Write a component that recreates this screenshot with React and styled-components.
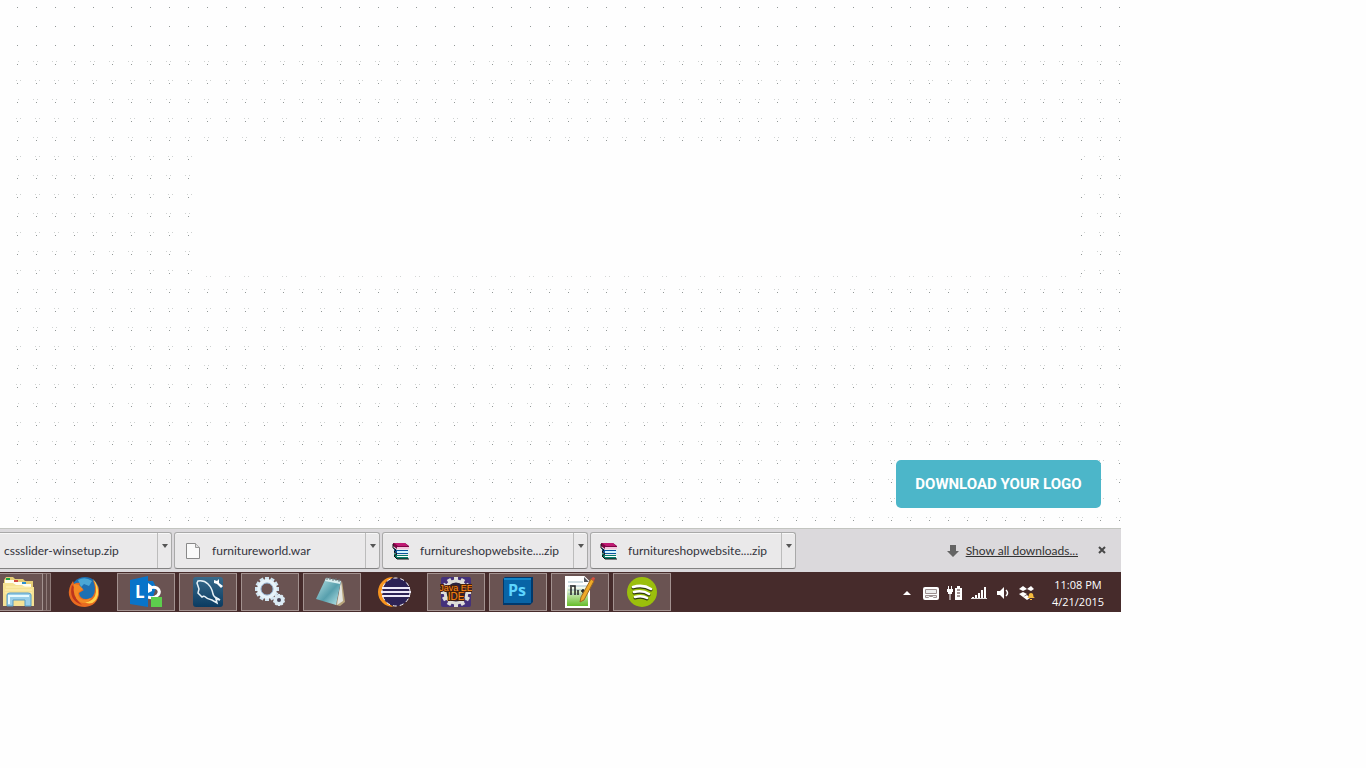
import React from "react";
import styled, { createGlobalStyle, css } from "styled-components";

const GlobalStyle = createGlobalStyle`
  * { box-sizing: border-box; }
  body { margin: 0; background: #fefefe; font-family: "Open Sans", "Noto Sans", sans-serif; }
  button { font: inherit; margin: 0; padding: 0; cursor: pointer; }
`;

const dot = (x, color) =>
  `conic-gradient(from 0deg at 1px 1px, transparent 75%, ${color} 0) ${x}`;

const Screen = styled.main`
  width: 100%;
  max-width: 1121px;
`;

const Canvas = styled.section`
  display: flex;
  flex-direction: column;
  min-height: 528px;
  background: ${dot("17px 7px / 19px 19px", "#929897")};
`;

const DenseDots = styled.div`
  flex: 1;
  display: flex;
  flex-direction: column;
  justify-content: space-between;
  margin: 60px 0 0 16px;
  padding: 84px 40px 20px 180px;
  background:
    ${dot("17px 1px / 19px 38px", "#cfd2d1")},
    ${dot("2px 1px / 19px 38px", "#cfd2d1")},
    ${dot("0 20px / 19px 38px", "#cfd2d1")},
    ${dot("4px 20px / 19px 38px", "#cfd2d1")};
`;

const BlankPanel = styled.div`
  height: 134px;
  background: ${dot("10px 132px / 19px 134px", "#d3d5d4")},
    ${dot("14px 132px / 19px 134px", "#d3d5d4")}, #fefefe;
`;

const DownloadButton = styled.button`
  align-self: flex-end;
  margin-right: -20px;
  width: 205px;
  height: 48px;
  border: 0;
  border-radius: 5px;
  color: #fff;
  font-family: Roboto, sans-serif;
  font-size: 15px;
  font-weight: 700;
  background: #4cb6c9;
`;

const Shelf = styled.section`
  display: flex;
  align-items: center;
  justify-content: space-between;
  height: 44px;
  border-top: 1px solid #c3c5c0;
  background: #dbd9dc;
`;

const FileList = styled.div`
  display: flex;
  gap: 2px;
`;

const FileItem = styled.div`
  display: flex;
  width: ${(p) => (p.$cut ? 172 : 206)}px;
  height: 37px;
  border: 1px solid #a9a9a9;
  border-bottom-color: #828282;
  border-left-width: ${(p) => (p.$cut ? 0 : 1)}px;
  border-radius: ${(p) => (p.$cut ? "0 3px 3px 0" : "3px")};
  box-shadow: inset 0 1px #f8f8f8;
  background: #eae9ea;
`;

const FileOpen = styled.button`
  flex: 1;
  display: flex;
  align-items: center;
  gap: 10px;
  padding-left: ${(p) => (p.$cut ? 4 : 9)}px;
  border: 0;
  background: none;
  color: #33333c;
  font-family: Lato, sans-serif;
  font-size: 12px;
  line-height: 16px;
  white-space: nowrap;
`;

const FileMenu = styled.button`
  display: flex;
  justify-content: center;
  width: 14px;
  padding-top: 11px;
  border: 0;
  border-left: 1px solid #bcbcbc;
  background: none;
`;

const ShelfActions = styled.div`
  display: flex;
  align-items: center;
  padding-right: 14px;
`;

const ShowAll = styled.a`
  margin-left: 7px;
  color: #333;
  font-family: Lato, sans-serif;
  font-size: 12px;
  line-height: 16px;
`;

const CloseButton = styled.button`
  display: flex;
  margin-left: 19px;
  border: 0;
  background: none;
`;

const Taskbar = styled.nav`
  display: flex;
  align-items: center;
  justify-content: space-between;
  height: 40px;
  background: #462b2b;
`;

const Apps = styled.div`
  display: flex;
  gap: 4px;
`;

const AppButton = styled.button`
  display: flex;
  align-items: center;
  justify-content: center;
  width: 58px;
  height: 38px;
  border: 1px solid transparent;
  background: none;
  ${(p) => p.$open && css`
    background: #6a5352;
    border-color: #a39290;
  `}
`;

const Explorer = styled(AppButton)`
  width: 43px;
  padding-right: 7px;
  border-left: 0;
`;

const StackedWindow = styled.span`
  width: 4px;
  height: 38px;
  border: 1px solid #8f7b79;
  border-left: 0;
  background: #604a49;
`;

const ExplorerGroup = styled.div`
  display: flex;
`;

const Tray = styled.div`
  display: flex;
  align-items: center;
  gap: 8px;
  padding: 2px 8px 0 0;
`;

const TrayButton = styled.button`
  display: flex;
  border: 0;
  background: none;
`;

const Clock = styled.time`
  width: 70px;
  color: #fff;
  font-size: 11px;
  line-height: 17px;
  text-align: center;
`;

const Svg = ({ w = 32, h = w, children }) => (
  <svg width={w} height={h} viewBox={`0 0 ${w} ${h}`} aria-hidden="true">{children}</svg>
);

const gear = (cx, cy, r, n, tooth, width, fill) =>
  Array.from({ length: n }, (_, i) => (
    <rect key={i} x={cx - width / 2} y={cy - r - tooth} width={width} height={tooth + 3} fill={fill}
      transform={`rotate(${(i * 360) / n} ${cx} ${cy})`} />
  ));

const FolderIcon = () => (
  <Svg w={34} h={32}>
    <path d="M3 4l2-3h7l2 2h8l2 2h8v24H2z" fill="#e6cd75" />
    <path d="M4 4h9v4H4zM13 6h9v3h-9zM20 8h10v3H20z" fill="#fffdf0" />
    <path d="M5 2h4v2H5z" fill="#20a342" />
    <path d="M13 4h4v2h-4z" fill="#d3483b" />
    <path d="M21 6h4v2h-4z" fill="#2c91ce" />
    <path d="M2 7h10l3 2h6l3 2h9v19H2z" fill="#f5e193" />
    <path d="M5 11h24M4 14h27M4 17h27" stroke="#fff1b4" />
    <path d="M6 30V19q0-2 3-2h18q3 0 3 2v11h-6v-6H12v6z" fill="#9acfe8" stroke="#569bc4" />
    <path d="M8 28v-8h20" fill="none" stroke="#e6faff" strokeWidth="2" />
  </Svg>
);

const FirefoxIcon = () => (
  <Svg>
    <circle cx="17" cy="15" r="14" fill="#1d70b3" />
    <path d="M10 4q7-4 14 1l-3 5-5-2-3 3z" fill="#4aa7d6" />
    <path d="M25 4q7 6 6 14-2 12-14 13Q4 31 1 19q-1-7 4-14l1 3q3-2 6-1l-1 4 5 3-5 3q1 6 7 6 5 0 7-3 4-6 0-16" fill="#e86b20" />
    <path d="M25 3q5 8 2 17-4 7-12 6 12 5 15-7 1-10-5-16" fill="#ffd34b" />
    <path d="M4 9Q0 24 14 29 5 22 8 13z" fill="#bd351c" />
    <path d="M6 8l5 1 4 4-5 4q0 7 8 7l5-2q-4 7-11 4-8-5-6-18" fill="#f48a24" />
  </Svg>
);

const LyncIcon = () => (
  <Svg>
    <path d="M17 5h6l3 6-3 10h-6z" fill="#0874c9" />
    <path d="M19 13q4-3 8-1 4 3 1 7-4 4-10 2" fill="none" stroke="#fff" strokeWidth="3" />
    <path d="M18 7l4 3v5l-4 2z" fill="#fff" />
    <path d="M0 4L18 0v31L0 28z" fill="#0874c9" />
    <text x="5" y="22" fill="#fff" fontFamily="Open Sans, sans-serif" fontSize="17" fontWeight="700">L</text>
    <path d="M21 21h11v10H21z" fill="#5dce4d" />
  </Svg>
);

const MysqlIcon = () => (
  <Svg>
    <defs><linearGradient id="navy" x2="0" y2="1"><stop stopColor="#386b8c" /><stop offset="1" stopColor="#0b3b61" /></linearGradient></defs>
    <rect x="1" y="1" width="30" height="30" rx="3" fill="url(#navy)" />
    <path d="M12 20l-2 1-4-4 1-4-2-6 1-2q6-1 10 3 4 4 5 10 1 4 6 5M12 20q3 3 8 4l5 3-1-4 4 1-5-3" fill="none" stroke="#e8f2f7" strokeWidth="1.5" />
    <path d="M22 4l3 1 2-2v4l4 3-2 2-4-4-3-1z" fill="#fff" />
  </Svg>
);

const GearsIcon = () => (
  <Svg>
    {gear(13, 13, 9, 12, 3, 4, "#d2e5f1")}
    <circle cx="13" cy="13" r="8" fill="none" stroke="#e7f4fa" strokeWidth="4" />
    <circle cx="13" cy="13" r="6" fill="none" stroke="#8daac9" />
    {gear(25, 24, 4, 10, 2, 2, "#d6e8f2")}
    <circle cx="25" cy="24" r="4" fill="none" stroke="#dceaf3" strokeWidth="3" />
    <circle cx="25" cy="24" r="2" fill="#4b4658" />
  </Svg>
);

const NotepadIcon = () => (
  <Svg>
    <defs><linearGradient id="pad" x2="1" y2="1"><stop stopColor="#bde5e7" /><stop offset=".55" stopColor="#579fad" /><stop offset="1" stopColor="#bfeaed" /></linearGradient></defs>
    <path d="M26 5l3 21-5 4-4-1z" fill="#b7a47b" />
    <path d="M25 4l2 21-6 4z" fill="#e3e4df" />
    <path d="M10 2l15 3-5 24-20-6z" fill="url(#pad)" />
    <path d="M10 2l15 3-1 3-15-3z" fill="#d8eef0" />
    <path d="M11 1v3M14 1v3M17 2v3M20 2v3M23 3v3" stroke="#69777b" />
  </Svg>
);

const EclipseIcon = () => (
  <Svg w={34} h={32}>
    <path d="M16 1A15 15 0 1 0 16 31Q0 16 16 1" fill="#f7941e" />
    <circle cx="19" cy="16" r="14" fill="#2c2255" />
    <circle cx="19" cy="16" r="14" fill="none" stroke="#fff" strokeDasharray="4 3" />
    <path d="M5 12h28M4 16h30M5 20h28" stroke="#eeeaf8" strokeWidth="2" />
  </Svg>
);

const JavaIcon = () => (
  <Svg>
    <rect x="1" y="1" width="30" height="30" rx="2" fill="#44317b" />
    {gear(16, 16, 11, 12, 4, 4, "#dededa")}
    <circle cx="16" cy="16" r="11" fill="#2b2440" stroke="#dededa" strokeWidth="3" />
    <g fill="#ff8a18" stroke="#46200c" strokeWidth="2" paintOrder="stroke" fontFamily="Liberation Sans, sans-serif" fontSize="9" textAnchor="middle">
      <text x="16" y="15">Java EE</text><text x="16" y="24" fontSize="10">IDE</text>
    </g>
  </Svg>
);

const PhotoshopIcon = () => (
  <Svg>
    <path d="M1 3l2-2h28v25l-3 3H1z" fill="#00396d" />
    <rect x="2" y="2" width="27" height="25" fill="#0864a6" />
    <path d="M2 2h27v2H2z" fill="#1385c8" />
    <text x="15" y="20" fill="#5ed5ff" fontFamily="Open Sans, sans-serif" fontSize="16" fontWeight="700" textAnchor="middle">Ps</text>
  </Svg>
);

const EditorIcon = () => (
  <Svg>
    <defs><linearGradient id="leaf" x2="0" y2="1"><stop offset=".3" stopColor="#fff" /><stop offset="1" stopColor="#5eb91f" /></linearGradient></defs>
    <path d="M2 1h18l5 5v25H2z" fill="url(#leaf)" stroke="#fff" strokeWidth="2" />
    <path d="M4 6h15M4 10h19M4 14h19M4 18h19" stroke="#9ebbc5" />
    <path d="M7 9v10M8 10h3v4M11 14v5M14 14v5M17 15h4M19 13v4" fill="none" stroke="#222" strokeWidth="1.5" />
    <path d="M20 1l5 5h-5z" fill="#52545c" />
    <path d="M27 3l3 2-10 19-4 2 1-5z" fill="#efaa28" stroke="#9d6920" />
    <path d="M27 3l3 2 1-3-2-1z" fill="#d6503f" />
  </Svg>
);

const SpotifyIcon = () => (
  <Svg>
    <circle cx="16" cy="16" r="15" fill="#9bbf0c" />
    <path d="M7 12q10-3 18 2M8 17q9-2 15 2M9 22q7-2 12 1" fill="none" stroke="#2c370c" strokeWidth="3" strokeLinecap="round" />
    <path d="M7 11q10-3 18 2M8 16q9-2 15 2M9 21q7-2 12 1" fill="none" stroke="#fff" strokeWidth="2.5" strokeLinecap="round" />
  </Svg>
);

const PageIcon = () => (
  <Svg w={18} h={18}>
    <path d="M2.500 1.500h9l4 4v11h-13z" fill="#fafafa" stroke="#898989" />
    <path d="M11.500 1.500v4h4" fill="#ddd" stroke="#999" />
  </Svg>
);

const ArchiveIcon = () => (
  <Svg w={18} h={18}>
    <path d="M1 1h12l4 3v3H5L1 4z" fill="#7d0745" />
    <path d="M2 1h11l3 3H6z" fill="#c01a73" />
    <path d="M5 5h12v2H5z" fill="#f4c4dc" />
    <path d="M2 6l3 2h11v4H5l-3-2z" fill="#0b559b" />
    <path d="M5 9h12v2H5z" fill="#d4f4ff" />
    <path d="M2 11l3 2h11v4H5l-3-3z" fill="#067c68" />
    <path d="M5 14h12v1H5z" fill="#fff" />
    <path d="M1 2v4l3 2-2 2 3 2-3 2 3 3h12" fill="none" stroke="#111" />
  </Svg>
);

const files = [
  { name: "cssslider-winsetup.zip", cut: true },
  { name: "furnitureworld.war", icon: <PageIcon /> },
  { name: "furnitureshopwebsite....zip", icon: <ArchiveIcon /> },
  { name: "furnitureshopwebsite....zip", icon: <ArchiveIcon /> },
];

const apps = [
  { name: "Firefox", icon: <FirefoxIcon /> },
  { name: "Lync", icon: <LyncIcon />, open: true },
  { name: "MySQL Workbench", icon: <MysqlIcon />, open: true },
  { name: "Services", icon: <GearsIcon />, open: true },
  { name: "Notepad", icon: <NotepadIcon />, open: true },
  { name: "Eclipse", icon: <EclipseIcon /> },
  { name: "Eclipse Java EE", icon: <JavaIcon />, open: true },
  { name: "Photoshop", icon: <PhotoshopIcon />, open: true },
  { name: "Notepad++", icon: <EditorIcon />, open: true },
  { name: "Spotify", icon: <SpotifyIcon />, open: true },
];

const tray = [
  { name: "Show hidden icons", icon: <Svg w={16}><path d="M4 10l4-4 4 4z" fill="#fff" /></Svg> },
  { name: "Touch keyboard", icon: (
    <Svg w={16}>
      <rect x="0" y="2" width="16" height="13" rx="2" fill="#fff" />
      <path d="M2.500 4.500h11v4h-11zM2.500 10.500h11v2h-3l-1-1h-3l-1 1h-3z" fill="#eee" stroke="#9d9090" />
    </Svg>) },
  { name: "Battery", icon: (
    <Svg w={16}>
      <path d="M1.500 1v3M4.500 1v3M3 9v6" stroke="#fff" />
      <path d="M0 4h6v3H5v2H1V7H0z" fill="#fff" />
      <path d="M8 3h2V1h3v2h2v12H8z" fill="#fff" />
      <path d="M10 5h3M10 8h3M10 11h3" stroke="#462b2b" />
    </Svg>) },
  { name: "Network", icon: (
    <Svg w={16}>
      <path d="M1 12h2v2H1zM4 10h2v4H4zM7 8h2v6H7zM10 5h2v9h-2zM13 2h2v12h-2z" fill="#fff" />
      <path d="M0 13.500h16" stroke="#ddd" />
    </Svg>) },
  { name: "Volume", icon: (
    <Svg w={16}>
      <path d="M2 6h3l4-4v12l-4-4H2z" fill="#fff" />
      <path d="M11 5q3 3 0 6" fill="none" stroke="#fff" strokeWidth="1.500" />
    </Svg>) },
  { name: "Dropbox", icon: (
    <Svg w={16}>
      <path d="M4 1l4 3-4 2-4-2zM12 1l3 3-3 2-4-2zM4 7l4 2-4 3-4-3zM4 12l4-2 3 3-3 2z" fill="#fff" />
      <path d="M8 13q2-1 2-4 2-2 4 0 0 3 2 4zM11 14h2v1h-2z" fill="#f5bb3f" />
    </Svg>) },
];

export default function App() {
  return (
    <>
      <GlobalStyle />
      <Screen>
        <Canvas>
          <DenseDots>
            <BlankPanel />
            <DownloadButton>DOWNLOAD YOUR LOGO</DownloadButton>
          </DenseDots>
        </Canvas>
        <Shelf aria-label="Downloads">
          <FileList>
            {files.map((f, i) => (
              <FileItem key={i} $cut={f.cut}>
                <FileOpen $cut={f.cut}>{f.icon}{f.name}</FileOpen>
                <FileMenu aria-label={`Options for ${f.name}`}>
                  <Svg w={6} h={4}><path d="M0 0h6L3 4z" fill="#555" /></Svg>
                </FileMenu>
              </FileItem>
            ))}
          </FileList>
          <ShelfActions>
            <Svg w={12} h={12}><path d="M3 0h6v6h3l-6 6-6-6h3z" fill="#646464" /></Svg>
            <ShowAll href="#downloads">Show all downloads...</ShowAll>
            <CloseButton aria-label="Close downloads">
              <Svg w={10} h={10}><path d="M2 1l6 6M8 1L2 7" stroke="#484848" strokeWidth="2" /></Svg>
            </CloseButton>
          </ShelfActions>
        </Shelf>
        <Taskbar aria-label="Taskbar">
          <Apps>
            <ExplorerGroup>
              <Explorer $open aria-label="File Explorer"><FolderIcon /></Explorer>
              <StackedWindow />
              <StackedWindow />
            </ExplorerGroup>
            {apps.map((a) => (
              <AppButton key={a.name} $open={a.open} aria-label={a.name}>{a.icon}</AppButton>
            ))}
          </Apps>
          <Tray>
            {tray.map((t) => <TrayButton key={t.name} aria-label={t.name}>{t.icon}</TrayButton>)}
            <Clock>11:08 PM<br />4/21/2015</Clock>
          </Tray>
        </Taskbar>
      </Screen>
    </>
  );
}
